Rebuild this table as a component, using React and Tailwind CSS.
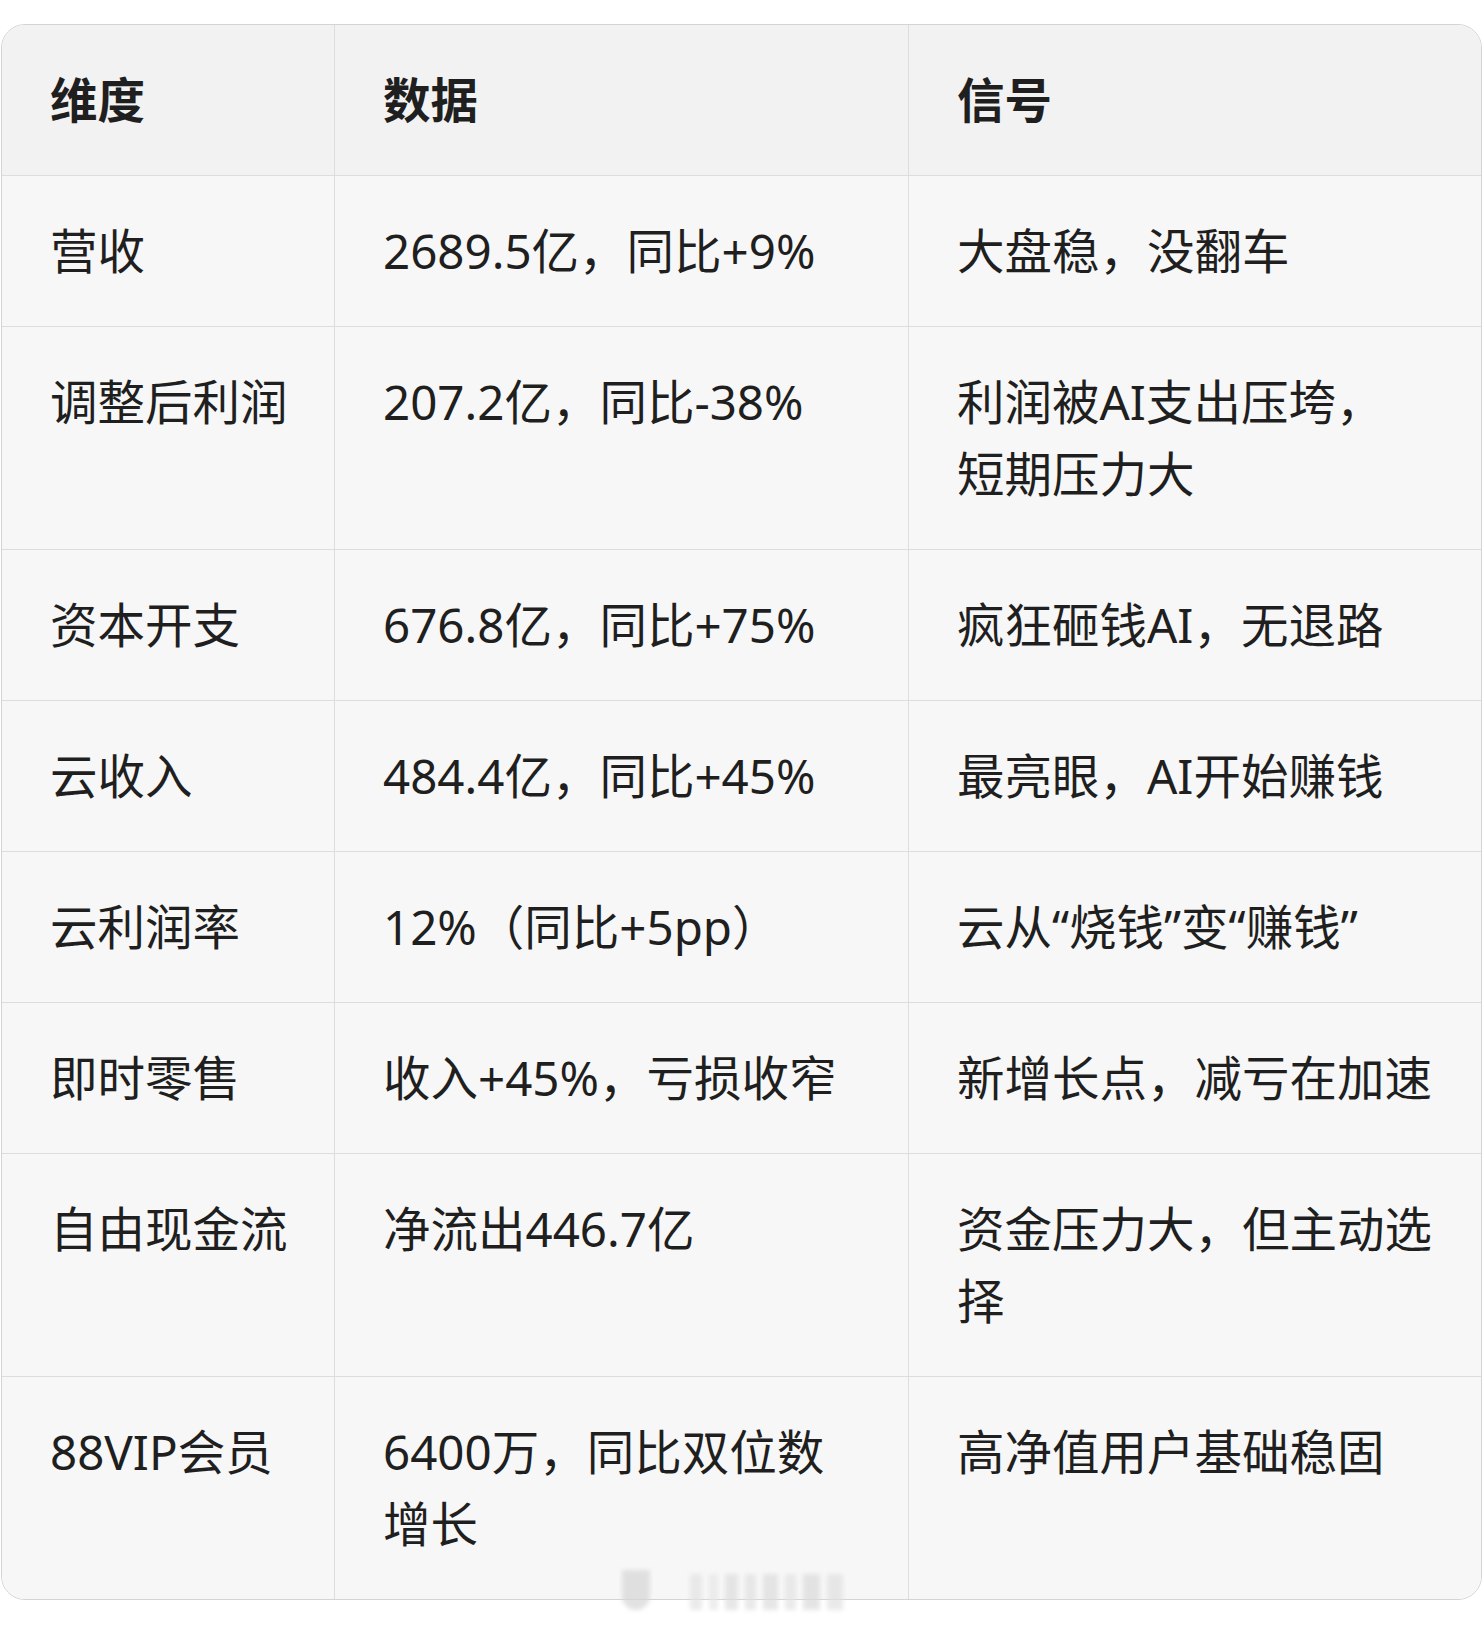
import React from "react";

const rows = [
  [["营收"], ["2689.5亿，同比+9%"], ["大盘稳，没翻车"]],
  [["调整后利润"], ["207.2亿，同比-38%"], ["利润被AI支出压垮，", "短期压力大"]],
  [["资本开支"], ["676.8亿，同比+75%"], ["疯狂砸钱AI，无退路"]],
  [["云收入"], ["484.4亿，同比+45%"], ["最亮眼，AI开始赚钱"]],
  [["云利润率"], ["12%（同比+5pp）"], ["云从“烧钱”变“赚钱”"]],
  [["即时零售"], ["收入+45%，亏损收窄"], ["新增长点，减亏在加速"]],
  [["自由现金流"], ["净流出446.7亿"], ["资金压力大，但主动选", "择"]],
  [["88VIP会员"], ["6400万，同比双位数", "增长"], ["高净值用户基础稳固"]],
];

function Cell({ lines, className }) {
  return (
    <div className={className}>
      {lines.map((l, i) => (
        <div key={i} className="whitespace-nowrap">
          {l}
        </div>
      ))}
    </div>
  );
}

export default function App() {
  return (
    <div
      className="relative w-[1484px] min-h-[1625px] bg-white pt-[24px] pl-[1px] pr-[2px] text-[#1f1f1f]"
      style={{ fontFamily: '"Noto Sans", "Noto Sans CJK SC", sans-serif' }}
    >
      <div className="overflow-hidden rounded-[24px] border border-[#d4d4d4] text-[47.5px] leading-[72px]">
        <div className="flex border-b border-[#dddddd] bg-[#f2f2f2] font-bold">
          <Cell lines={["维度"]} className="w-[333px] shrink-0 border-r border-[#dddddd] px-[48px] py-[39px]" />
          <Cell lines={["数据"]} className="w-[574px] shrink-0 border-r border-[#dddddd] px-[48px] py-[39px]" />
          <Cell lines={["信号"]} className="flex-1 px-[48px] py-[39px]" />
        </div>
        {rows.map((r, i) => (
          <div
            key={i}
            className={
              "flex bg-[#f7f7f7] " +
              (i < rows.length - 1 ? "border-b border-[#dddddd]" : "")
            }
          >
            <Cell lines={r[0]} className="w-[333px] shrink-0 border-r border-[#dddddd] px-[48px] py-[39px]" />
            <Cell lines={r[1]} className="w-[574px] shrink-0 border-r border-[#dddddd] px-[48px] py-[39px]" />
            <Cell lines={r[2]} className="flex-1 pl-[48px] pr-[20px] py-[39px]" />
          </div>
        ))}
      </div>
      <div className="pointer-events-none absolute left-[622px] top-[1566px] flex h-[44px] items-end gap-[7px] opacity-70 blur-[2px]">
        <div className="h-[40px] w-[28px] rounded-b-[14px] bg-[#d6d6d6]" />
        <div className="w-[26px]" />
        <div className="h-[36px] w-[12px] bg-[#e2e2e2]" />
        <div className="h-[36px] w-[9px] bg-[#e6e6e6]" />
        <div className="h-[36px] w-[13px] bg-[#dddddd]" />
        <div className="h-[36px] w-[11px] bg-[#e0e0e0]" />
        <div className="h-[36px] w-[15px] bg-[#dcdcdc]" />
        <div className="h-[36px] w-[11px] bg-[#e2e2e2]" />
        <div className="h-[36px] w-[17px] bg-[#dadada]" />
        <div className="h-[36px] w-[16px] bg-[#e0e0e0]" />
      </div>
    </div>
  );
}
